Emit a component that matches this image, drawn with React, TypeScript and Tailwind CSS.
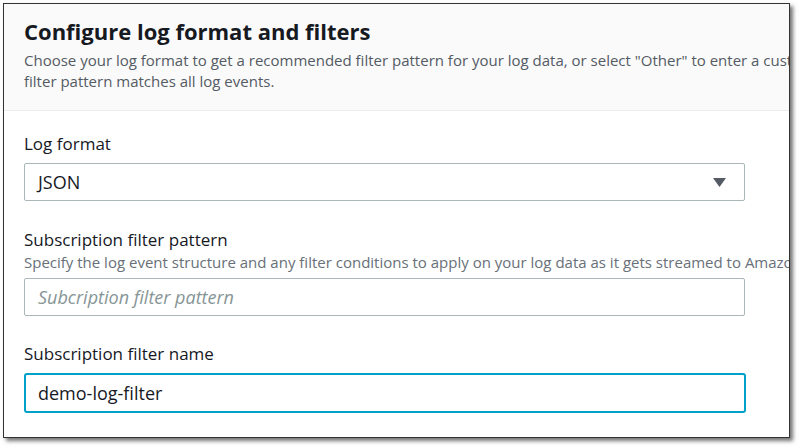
export default function App() {
  return (
    <div className="w-[800px] h-[448px] bg-white overflow-hidden pt-[3px] pl-[3px] font-['Open_Sans',sans-serif]">
      <div className="w-[787px] h-[435px] border border-[#333333] bg-white shadow-[3px_3px_4px_rgba(0,0,0,0.55)] overflow-hidden">
        {/* Header */}
        <div className="h-[107px] bg-[#fafafa] border-b border-[#eaeded] pl-[20px] pt-[13px]">
          <h2 className="text-[22px] leading-[28px] font-bold text-[#16191f] whitespace-nowrap">
            Configure log format and filters
          </h2>
          <p className="mt-[5px] text-[15px] leading-[21px] text-[#545b64] whitespace-nowrap">
            Choose your log format to get a recommended filter pattern for your log data, or select "Other" to enter a custom filter pattern. An empty
          </p>
          <p className="text-[15px] leading-[21px] text-[#545b64] whitespace-nowrap">
            filter pattern matches all log events.
          </p>
        </div>

        {/* Form body */}
        <div className="pl-[20px] pt-[22px] flex flex-col">
          <label className="text-[17px] leading-[22px] text-[#16191f]">Log format</label>
          <div className="mt-[8px] w-[721px] h-[38px] border border-[#aab7b8] rounded-[2px] flex items-center justify-between pl-[13px] pr-[18px]">
            <span className="text-[18px] text-[#16191f]">JSON</span>
            <svg width="13" height="9" viewBox="0 0 13 9" className="text-[#545b64]">
              <path d="M0 0h13L6.5 9z" fill="currentColor" />
            </svg>
          </div>

          <label className="mt-[28px] text-[17px] leading-[22px] text-[#16191f]">Subscription filter pattern</label>
          <p className="mt-[1px] text-[15px] leading-[20px] text-[#687078] whitespace-nowrap">
            Specify the log event structure and any filter conditions to apply on your log data as it gets streamed to Amazon Elasticsearch Service.
          </p>
          <div className="mt-[6px] w-[721px] h-[38px] border border-[#aab7b8] rounded-[2px] flex items-center pl-[13px]">
            <span className="text-[18px] italic text-[#879596]">Subcription filter pattern</span>
          </div>

          <label className="mt-[27px] text-[17px] leading-[22px] text-[#16191f]">Subscription filter name</label>
          <div className="mt-[8px] w-[722px] h-[40px] border-2 border-[#00a1c9] rounded-[3px] flex items-center pl-[12px]">
            <span className="text-[18px] text-[#16191f]">demo-log-filter</span>
          </div>
        </div>
      </div>
    </div>
  );
}
